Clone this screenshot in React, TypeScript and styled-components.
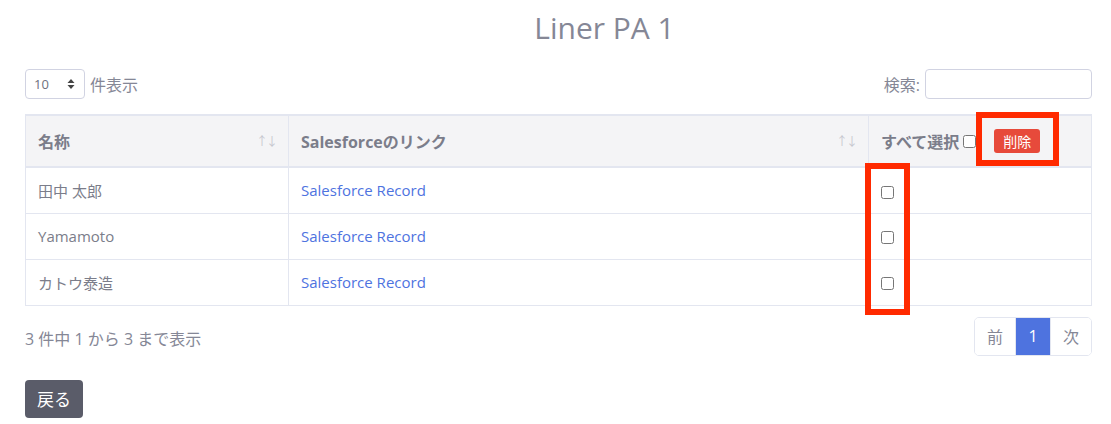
import React from "react";
import styled, { createGlobalStyle } from "styled-components";

const GlobalStyle = createGlobalStyle`
  body {
    margin: 0;
    background: #fff;
    font-family: "Open Sans", "Noto Sans CJK JP", sans-serif;
    color: #858796;
  }
`;

const Page = styled.div`
  position: relative;
  padding: 0 19px 0 25px;
`;

const Title = styled.h1`
  margin: 0;
  padding: 10px 0 0 92px;
  text-align: center;
  font-size: 30px;
  line-height: 36px;
  font-weight: 400;
  color: #858796;
`;

const Controls = styled.div`
  display: flex;
  justify-content: space-between;
  align-items: center;
  margin-top: 23px;
  height: 30px;
`;

const Label = styled.label`
  display: flex;
  align-items: center;
  gap: 5px;
  font-size: 16px;
  color: #858796;
`;

const Select = styled.div`
  width: 60px;
  height: 30px;
  box-sizing: border-box;
  border: 1px solid #d1d3e2;
  border-radius: 4px;
  display: flex;
  align-items: center;
  justify-content: space-between;
  padding: 0 9px 0 8px;
  font-size: 13px;
  color: #6e707e;
`;

const SearchInput = styled.input`
  width: 167px;
  height: 30px;
  box-sizing: border-box;
  border: 1px solid #d1d3e2;
  border-radius: 4px;
  margin: 0;
`;

const Table = styled.table`
  width: 100%;
  margin-top: 15px;
  border-collapse: collapse;
  border: 1px solid #e3e6f0;
  font-size: 15px;
`;

const Th = styled.th<{ $w?: number }>`
  width: ${({ $w }) => ($w ? `${$w}px` : "auto")};
  height: 52px;
  box-sizing: border-box;
  padding: 0 12px;
  background: #f4f4f6;
  border: 1px solid #e3e6f0;
  border-top: 2px solid #e3e6f0;
  border-bottom: 2px solid #e3e6f0;
  text-align: left;
  font-size: 16px;
  font-weight: 700;
  color: #7b7d8a;
  position: relative;
`;

const HeadInner = styled.div`
  display: flex;
  align-items: center;
`;

const SortIcon = styled.span`
  position: absolute;
  right: 12px;
  top: 50%;
  transform: translateY(-50%);
  font-size: 12px;
  letter-spacing: -2px;
  color: #c6c7cf;
  font-weight: 400;
`;

const Td = styled.td`
  height: 46px;
  box-sizing: border-box;
  padding: 0 12px;
  border: 1px solid #e3e6f0;
  color: #7b7d8a;
`;

const RecordLink = styled.a`
  color: #4e73df;
  text-decoration: none;
`;

const Check = styled.input`
  width: 13px;
  height: 13px;
  margin: 0;
  vertical-align: middle;
`;

const DeleteButton = styled.button`
  margin-left: 18px;
  height: 24px;
  padding: 0 9px;
  border: none;
  border-radius: 3px;
  background: #e74a3b;
  color: #fff;
  font-family: inherit;
  font-size: 14px;
`;

const Footer = styled.div`
  display: flex;
  justify-content: space-between;
  align-items: center;
  margin-top: 11px;
`;

const Info = styled.div`
  font-size: 16px;
  padding-top: 3px;
  color: #858796;
`;

const Pager = styled.div`
  display: flex;
  height: 37px;
  border: 1px solid #e3e6f0;
  border-radius: 5px;
  overflow: hidden;
`;

const PageItem = styled.span<{ $active?: boolean }>`
  display: flex;
  align-items: center;
  justify-content: center;
  width: ${({ $active }) => ($active ? "34px" : "40px")};
  font-size: 16px;
  background: ${({ $active }) => ($active ? "#4e73df" : "#fff")};
  color: ${({ $active }) => ($active ? "#fff" : "#858796")};
  & + & {
    border-left: 1px solid #e3e6f0;
  }
`;

const BackButton = styled.button`
  margin-top: 24px;
  height: 38px;
  padding: 0 12px;
  border: none;
  border-radius: 4px;
  background: #5a5c69;
  color: #fff;
  font-family: inherit;
  font-size: 17px;
`;

const Marker = styled.div<{ $x: number; $y: number; $w: number; $h: number }>`
  position: absolute;
  left: ${({ $x }) => $x}px;
  top: ${({ $y }) => $y}px;
  width: ${({ $w }) => $w}px;
  height: ${({ $h }) => $h}px;
  box-sizing: border-box;
  border: 6px solid #ff2a00;
  pointer-events: none;
`;

const rows = ["田中 太郎", "Yamamoto", "カトウ泰造"];

export default function App() {
  return (
    <>
      <GlobalStyle />
      <Page>
        <Title>Liner PA 1</Title>
        <Controls>
          <Label>
            <Select>
              <span>10</span>
              <svg width="8" height="12" viewBox="0 0 8 12">
                <path d="M4 1 L7.5 5 H0.5 Z M4 11 L7.5 7 H0.5 Z" fill="#444" />
              </svg>
            </Select>
            件表示
          </Label>
          <Label>
            検索:
            <SearchInput type="text" />
          </Label>
        </Controls>
        <Table>
          <thead>
            <tr>
              <Th $w={263}>
                名称<SortIcon>↑↓</SortIcon>
              </Th>
              <Th $w={580}>
                Salesforceのリンク<SortIcon>↑↓</SortIcon>
              </Th>
              <Th>
                <HeadInner>
                  すべて選択
                  <Check type="checkbox" style={{ marginLeft: 4 }} />
                  <DeleteButton>削除</DeleteButton>
                </HeadInner>
              </Th>
            </tr>
          </thead>
          <tbody>
            {rows.map((name) => (
              <tr key={name}>
                <Td>{name}</Td>
                <Td>
                  <RecordLink href="#">Salesforce Record</RecordLink>
                </Td>
                <Td>
                  <Check type="checkbox" />
                </Td>
              </tr>
            ))}
          </tbody>
        </Table>
        <Footer>
          <Info>3 件中 1 から 3 まで表示</Info>
          <Pager>
            <PageItem>前</PageItem>
            <PageItem $active>1</PageItem>
            <PageItem>次</PageItem>
          </Pager>
        </Footer>
        <BackButton>戻る</BackButton>
        <Marker $x={976} $y={112} $w={83} $h={54} />
        <Marker $x={865} $y={163} $w={45} $h={152} />
      </Page>
    </>
  );
}
